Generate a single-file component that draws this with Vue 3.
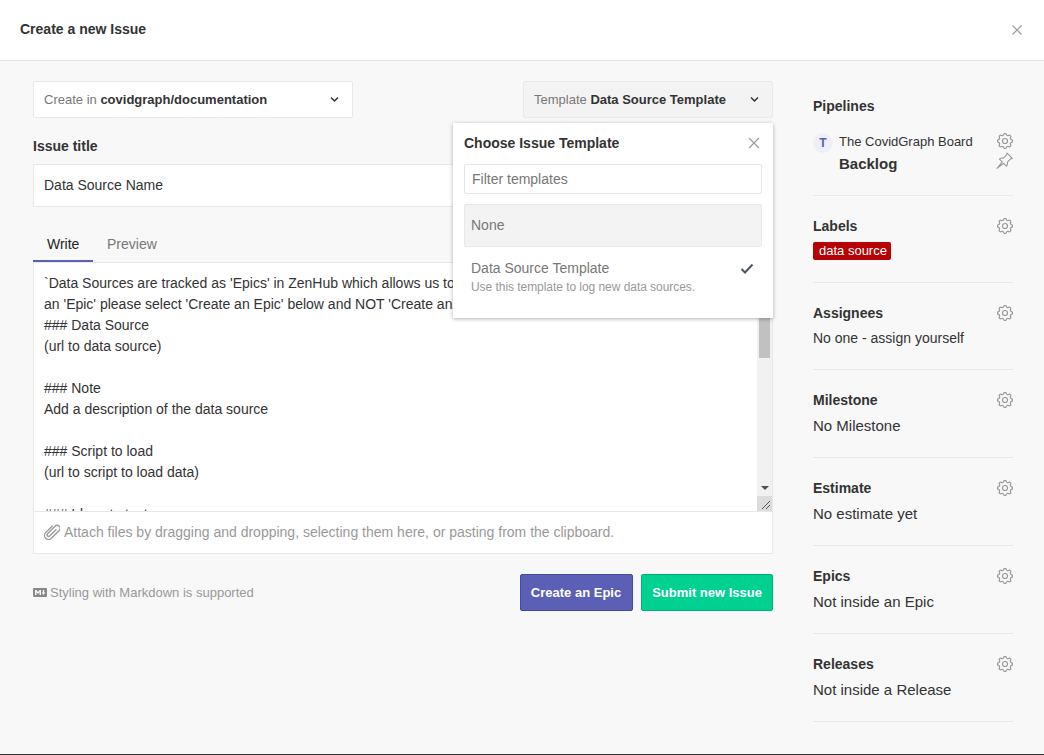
<template>
  <div class="page">
    <header class="top">
      <h1>Create a new Issue</h1>
      <svg class="close" width="12" height="12" viewBox="0 0 12 12"><path d="M1.500 1.500l9 9M10.500 1.500l-9 9" /></svg>
    </header>

    <div class="body">
      <main class="main">
        <div class="selects">
          <div class="select repo">
            <span><span class="muted">Create in</span> <b>covidgraph/documentation</b></span>
            <svg class="chev" width="9" height="7" viewBox="0 0 9 7"><path d="M1 1.500L4.500 5 8 1.500" /></svg>
          </div>
          <div class="select template">
            <span><span class="muted">Template</span> <b>Data Source Template</b></span>
            <svg class="chev" width="9" height="7" viewBox="0 0 9 7"><path d="M1 1.500L4.500 5 8 1.500" /></svg>
          </div>

          <div class="popover">
            <div class="pop-head">
              <span>Choose Issue Template</span>
              <svg class="pop-close" width="12" height="12" viewBox="0 0 12 12"><path d="M1 1l10 10M11 1L1 11" /></svg>
            </div>
            <div class="filter">Filter templates</div>
            <div class="opt-none">None</div>
            <div class="opt">
              <div>
                <div class="opt-name">Data Source Template</div>
                <div class="opt-desc">Use this template to log new data sources.</div>
              </div>
              <svg class="tick" width="14" height="11" viewBox="0 0 14 11"><path d="M1.500 6l3.500 3.500L12.500 1.500" /></svg>
            </div>
          </div>
        </div>

        <label class="title-label">Issue title</label>
        <div class="title-input">Data Source Name</div>

        <div class="tabs">
          <span class="tab active">Write</span>
          <span class="tab">Preview</span>
        </div>

        <div class="editor">
          <div class="area">
            <div class="text">
              <div v-for="(line, i) in lines" :key="i" class="line">{{ line }}</div>
            </div>
            <div class="scrollbar">
              <div class="thumb"></div>
              <div class="arrow"></div>
              <div class="resizer">
                <svg width="12" height="12" viewBox="0 0 12 12"><path d="M11 3l-8 8M11 7l-4 4" /></svg>
              </div>
            </div>
          </div>
          <div class="attach">
            <svg width="16" height="16" viewBox="3 3 18 18"><path transform="rotate(45 12 12)" d="M7.500 7v10.500a4.500 4.500 0 0 0 9 0V5a3.300 3.300 0 0 0-6.600 0v12a1.700 1.700 0 0 0 3.400 0V7" /></svg>
            <span>Attach files by dragging and dropping, selecting them here, or pasting from the clipboard.</span>
          </div>
        </div>

        <div class="foot">
          <div class="md">
            <svg width="14" height="9" viewBox="0 0 14 9"><path fill-rule="evenodd" d="M1 0h12a1 1 0 0 1 1 1v7a1 1 0 0 1-1 1H1a1 1 0 0 1-1-1V1a1 1 0 0 1 1-1zm1 7h1.400V4.200L5 6l1.600-1.800V7H8V2H6.600L5 3.900 3.400 2H2zm8.200 0L12.600 4.500H11.200V2H9.800v2.500H8.800z" /></svg>
            <span>Styling with Markdown is supported</span>
          </div>
          <div class="btns">
            <button class="btn epic">Create an Epic</button>
            <button class="btn submit">Submit new Issue</button>
          </div>
        </div>
      </main>

      <aside class="side">
        <section class="sec pipelines">
          <h3>Pipelines</h3>
          <div class="pipe">
            <span class="avatar">T</span>
            <div class="pipe-text">
              <div class="board">The CovidGraph Board</div>
              <div class="backlog">Backlog</div>
            </div>
            <div class="pipe-icons">
              <svg class="gear" width="16" height="16" viewBox="2.500 2.500 19 19"><path :d="gearPath" /><circle cx="12" cy="12" r="3" /></svg>
              <svg class="gear pin" width="17" height="17" viewBox="0 0 24 24"><path d="M15.500 1.500l7.500 7.500-2.300.7-4.700 4.700c.5 2.300 0 4.200-1.300 5.500l-4-4-9.200 7.300 7.300-9.200-4-4c1.300-1.300 3.200-1.800 5.500-1.300l4.700-4.700z" /></svg>
            </div>
          </div>
        </section>

        <section class="sec labels">
          <div class="sec-head">
            <h3>Labels</h3>
            <svg class="gear" width="16" height="16" viewBox="2.500 2.500 19 19"><path :d="gearPath" /><circle cx="12" cy="12" r="3" /></svg>
          </div>
          <span class="chip">data source</span>
        </section>

        <section v-for="s in sections" :key="s.name" class="sec">
          <div class="sec-head">
            <h3>{{ s.name }}</h3>
            <svg class="gear" width="16" height="16" viewBox="2.500 2.500 19 19"><path :d="gearPath" /><circle cx="12" cy="12" r="3" /></svg>
          </div>
          <div :class="['value', { small: s.small }]">{{ s.value }}</div>
        </section>
      </aside>
    </div>
  </div>
</template>

<script setup>
const gearPath = 'M10.325 4.317c.426-1.756 2.924-1.756 3.35 0a1.724 1.724 0 002.573 1.066c1.543-.94 3.31.826 2.37 2.37a1.724 1.724 0 001.065 2.572c1.756.426 1.756 2.924 0 3.35a1.724 1.724 0 00-1.066 2.573c.94 1.543-.826 3.31-2.37 2.37a1.724 1.724 0 00-2.572 1.065c-.426 1.756-2.924 1.756-3.35 0a1.724 1.724 0 00-2.573-1.066c-1.543.94-3.31-.826-2.37-2.37a1.724 1.724 0 00-1.065-2.572c-1.756-.426-1.756-2.924 0-3.35a1.724 1.724 0 001.066-2.573c-.94-1.543.826-3.31 2.37-2.37.996.608 2.296.07 2.572-1.065z'

const lines = [
  "`Data Sources are tracked as 'Epics' in ZenHub which allows us to",
  "an 'Epic' please select 'Create an Epic' below and NOT 'Create an",
  '### Data Source',
  '(url to data source)',
  '\u00a0',
  '### Note',
  'Add a description of the data source',
  '\u00a0',
  '### Script to load',
  '(url to script to load data)',
  '\u00a0',
  '### Ideas to test',
]

const sections = [
  { name: 'Assignees', value: 'No one - assign yourself', small: true },
  { name: 'Milestone', value: 'No Milestone' },
  { name: 'Estimate', value: 'No estimate yet' },
  { name: 'Epics', value: 'Not inside an Epic' },
  { name: 'Releases', value: 'Not inside a Release' },
]
</script>

<style>
html, body {
  margin: 0;
  background: #f8f8f8;
}
</style>

<style scoped>
.page {
  box-sizing: border-box;
  height: 755px;
  overflow: hidden;
  background: #f8f8f8;
  border-bottom: 1px solid #333;
  color: #333;
  font-family: "Liberation Sans", Arial, sans-serif;
  font-size: 14px;
}

.top {
  box-sizing: border-box;
  height: 61px;
  display: flex;
  align-items: center;
  justify-content: space-between;
  padding: 0 21px 3px 20px;
  background: #fff;
  border-bottom: 1px solid #e5e5e5;
}

.top h1 {
  margin: 0;
  font-size: 14px;
  font-weight: 700;
}

.close path,
.pop-close path {
  fill: none;
  stroke: #999;
  stroke-width: 1.2;
}

.close {
  margin-top: 2px;
}

.body {
  display: flex;
  gap: 40px;
  padding: 20px 31px 0 33px;
}

.main {
  width: 740px;
}

.selects {
  position: relative;
  display: flex;
  justify-content: space-between;
}

.select {
  box-sizing: border-box;
  height: 37px;
  display: flex;
  align-items: center;
  justify-content: space-between;
  padding: 0 13px 0 10px;
  border: 1px solid #e8e8e8;
  border-radius: 2px;
  font-size: 13px;
}

.repo {
  width: 320px;
  background: #fff;
}

.template {
  width: 250px;
  background: #f3f3f3;
}

.muted {
  color: #777;
}

.chev path {
  fill: none;
  stroke: #333;
  stroke-width: 1.5;
}

.popover {
  position: absolute;
  top: 42px;
  right: 0;
  z-index: 5;
  box-sizing: border-box;
  width: 320px;
  height: 195px;
  padding: 0 11px;
  background: #fff;
  box-shadow: 0 1px 4px rgba(0, 0, 0, 0.3);
}

.pop-head {
  height: 40px;
  display: flex;
  align-items: center;
  justify-content: space-between;
  padding-right: 2px;
  font-weight: 700;
}

.pop-close path {
  stroke-width: 1.1;
}

.filter {
  box-sizing: border-box;
  height: 30px;
  margin-top: 1px;
  padding: 0 7px;
  display: flex;
  align-items: center;
  border: 1px solid #e5e5e5;
  border-radius: 2px;
  color: #777;
}

.opt-none {
  box-sizing: border-box;
  height: 43px;
  margin-top: 10px;
  padding: 0 6px 2px;
  display: flex;
  align-items: center;
  background: #f3f3f3;
  border: 1px solid #e8e8e8;
  border-radius: 2px;
  color: #777;
}

.opt {
  display: flex;
  justify-content: space-between;
  padding: 12px 8px 0 7px;
}

.opt-name {
  color: #777;
  line-height: 18px;
}

.opt-desc {
  margin-top: 2px;
  color: #999;
  font-size: 12px;
  line-height: 16px;
  letter-spacing: -0.05px;
}

.tick {
  margin-top: 4px;
}

.tick path {
  fill: none;
  stroke: #4a5568;
  stroke-width: 2;
}

.title-label {
  display: block;
  margin-top: 19px;
  font-weight: 700;
  line-height: 18px;
}

.title-input {
  box-sizing: border-box;
  height: 43px;
  margin-top: 9px;
  padding: 0 10px 2px;
  display: flex;
  align-items: center;
  background: #fff;
  border: 1px solid #e8e8e8;
}

.tabs {
  display: flex;
  margin-top: 21px;
}

.tab {
  box-sizing: border-box;
  height: 34px;
  padding: 7px 14px 0;
  color: #777;
  line-height: 18px;
}

.tab.active {
  width: 60px;
  color: #222;
  border-bottom: 2px solid #5b5fb5;
}

.editor {
  box-sizing: border-box;
  background: #fff;
  border: 1px solid #e8e8e8;
}

.area {
  height: 248px;
  display: flex;
  overflow: hidden;
  border-bottom: 1px solid #e8e8e8;
}

.text {
  flex: 1;
  padding: 10px 10px 0;
  line-height: 21px;
  white-space: pre;
  overflow: hidden;
}

.scrollbar {
  position: relative;
  width: 15px;
  background: #f1f1f1;
}

.thumb {
  position: absolute;
  top: 40px;
  left: 2px;
  width: 11px;
  height: 55px;
  background: #c1c1c1;
}

.arrow {
  position: absolute;
  bottom: 21px;
  left: 4px;
  width: 0;
  height: 0;
  border-top: 4px solid #505050;
  border-left: 4px solid transparent;
  border-right: 4px solid transparent;
}

.resizer {
  position: absolute;
  right: 0;
  bottom: 0;
  width: 15px;
  height: 15px;
  background: #dcdcdc;
}

.resizer svg {
  position: absolute;
  right: 1px;
  bottom: 1px;
}

.resizer path {
  fill: none;
  stroke: #555;
  stroke-width: 1;
}

.attach {
  box-sizing: border-box;
  height: 41px;
  display: flex;
  align-items: center;
  gap: 4px;
  padding: 0 0 2px 10px;
  color: #999;
}

.attach svg path {
  fill: none;
  stroke: #999;
  stroke-width: 1.5;
  stroke-linecap: round;
  stroke-linejoin: round;
}

.foot {
  display: flex;
  align-items: center;
  justify-content: space-between;
  margin-top: 20px;
}

.md {
  display: flex;
  align-items: center;
  gap: 3px;
  color: #999;
  font-size: 13px;
}

.md svg {
  fill: #888;
}

.btns {
  display: flex;
  gap: 8px;
}

.btn {
  box-sizing: border-box;
  height: 37px;
  padding: 0 10px;
  border-radius: 2px;
  color: #fff;
  font-family: inherit;
  font-size: 13px;
  font-weight: 700;
}

.epic {
  padding-right: 11px;
  background: #5b5fb5;
  border: 1px solid #4649a0;
}

.submit {
  background: #00d191;
  border: 1px solid #00b07b;
}

.side {
  width: 200px;
}

.sec {
  padding: 20px 0;
  border-bottom: 1px solid #e8e8e8;
}

.sec h3 {
  margin: 0;
  font-size: 14px;
  font-weight: 700;
  line-height: 20px;
}

.pipelines {
  padding-top: 15px;
  height: 99px;
  padding-bottom: 0;
}

.pipe {
  display: flex;
  margin-top: 17px;
}

.avatar {
  width: 20px;
  height: 20px;
  flex: none;
  display: flex;
  align-items: center;
  justify-content: center;
  border-radius: 50%;
  background: #eeeff8;
  color: #5b5fb5;
  font-size: 12px;
  font-weight: 700;
}

.pipe-text {
  flex: 1;
  margin-left: 6px;
}

.board {
  font-size: 13px;
  line-height: 18px;
}

.backlog {
  margin-top: 2px;
  font-size: 15px;
  font-weight: 700;
  line-height: 22px;
}

.pipe-icons {
  display: flex;
  flex-direction: column;
  align-items: flex-end;
  gap: 3px;
}

.gear {
  display: block;
  flex: none;
}

.gear path,
.gear circle {
  fill: none;
  stroke: #999;
  stroke-width: 1.4;
}

.pin path {
  stroke-width: 1.5;
  stroke-linejoin: round;
}

.sec-head {
  display: flex;
  align-items: center;
  justify-content: space-between;
}

.labels {
  padding-bottom: 22px;
}

.chip {
  display: block;
  box-sizing: border-box;
  width: 78px;
  margin-top: 6px;
  padding-left: 6px;
  background: #b60205;
  border-radius: 2px;
  color: #fff;
  font-size: 13px;
  line-height: 18px;
  white-space: nowrap;
}

.value {
  margin-top: 4px;
  font-size: 15px;
  line-height: 23px;
}

.value.small {
  font-size: 14px;
  line-height: 22px;
}
</style>
